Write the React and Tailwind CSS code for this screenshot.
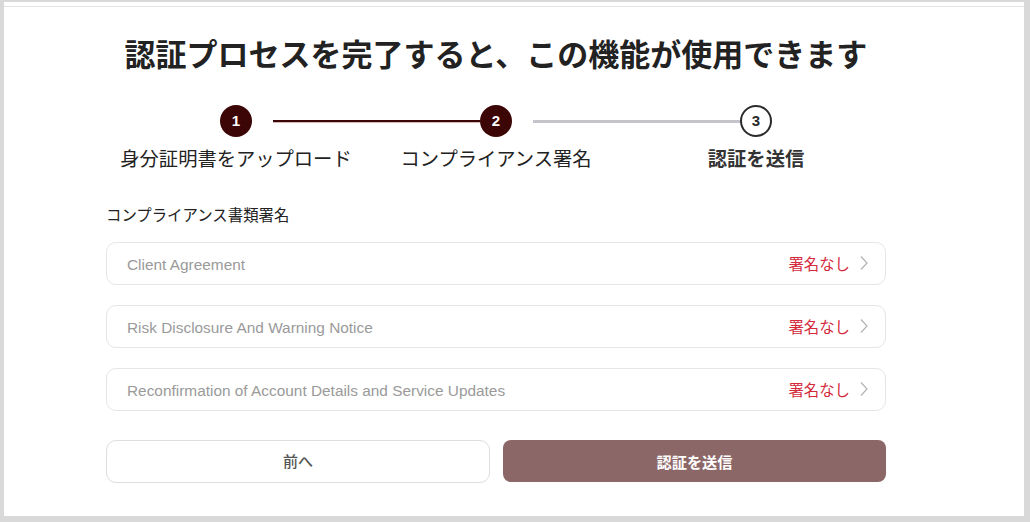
const JP = { fontFamily: '"Noto Sans CJK JP", "Liberation Sans", sans-serif' }
const LAT = { fontFamily: '"Liberation Sans", "Noto Sans CJK JP", sans-serif' }

const docs = [
  'Client Agreement',
  'Risk Disclosure And Warning Notice',
  'Reconfirmation of Account Details and Service Updates',
]

function Chevron() {
  return (
    <svg width="10" height="16" viewBox="0 0 10 16" fill="none">
      <polyline points="2,1.5 8,8 2,14.5" stroke="#b3b3b3" strokeWidth="1.2" />
    </svg>
  )
}

export default function App() {
  return (
    <div className="min-h-[522px] bg-[#d9d9d9] pt-[2px] pl-[4px]" style={JP}>
      <div className="w-[1020px] h-[514px] bg-white pt-[4px]">
        <div className="border-t border-[#e2e2e2]">
          {/* Title */}
          <div className="w-[780px] ml-[102px] pt-[26px]">
            <h1 className="text-center text-[31px] leading-[40px] font-bold text-[#222]">
              認証プロセスを完了すると、この機能が使用できます
            </h1>

            {/* Stepper */}
            <div className="flex items-center mt-[32px] pl-[114px]">
              <div className="w-[32px] h-[32px] rounded-full bg-[#3d0606] text-white flex items-center justify-center text-[15px] font-bold" style={LAT}>1</div>
              <div className="ml-[21px] w-[207px] h-[2px] bg-[#3d0606] shadow-[0_1px_0_#d4b8b8]" />
              <div className="w-[32px] h-[32px] rounded-full bg-[#3d0606] text-white flex items-center justify-center text-[15px] font-bold" style={LAT}>2</div>
              <div className="ml-[21px] w-[207px] h-[3px] bg-[#c3c5ca]" />
              <div className="w-[32px] h-[32px] rounded-full border-2 border-[#2a2a2a] bg-white text-[#2a2a2a] flex items-center justify-center text-[15px] font-bold" style={LAT}>3</div>
            </div>
            <div className="grid grid-cols-3 mt-[7px] text-center text-[19.3px] leading-[28px] text-[#222]">
              <div>身分証明書をアップロード</div>
              <div>コンプライアンス署名</div>
              <div className="font-bold text-[#333]">認証を送信</div>
            </div>

            {/* Documents */}
            <div className="mt-[32px] text-[15.4px] leading-[20px] text-[#222]">コンプライアンス書類署名</div>
            <div className="mt-[18px] flex flex-col gap-[20px]">
              {docs.map((d) => (
                <div key={d} className="h-[43px] border border-[#e6e6e6] rounded-[10px] flex items-center justify-between pl-[20px] pr-[16px]">
                  <span className="text-[15.4px] leading-[20px] pt-[2px] text-[#9a9a9a]" style={LAT}>{d}</span>
                  <span className="flex items-center gap-[9px]">
                    <span className="text-[15.4px] text-[#d42a3c]">署名なし</span>
                    <Chevron />
                  </span>
                </div>
              ))}
            </div>

            {/* Buttons */}
            <div className="mt-[29px] flex gap-[13px]">
              <button className="w-[384px] h-[43px] border border-[#dedede] rounded-[10px] bg-white text-[15px] font-medium text-[#555]">前へ</button>
              <button className="w-[383px] h-[42px] rounded-[8px] bg-[#8c6767] text-[15.2px] font-bold text-white">認証を送信</button>
            </div>
          </div>
        </div>
      </div>
    </div>
  )
}
